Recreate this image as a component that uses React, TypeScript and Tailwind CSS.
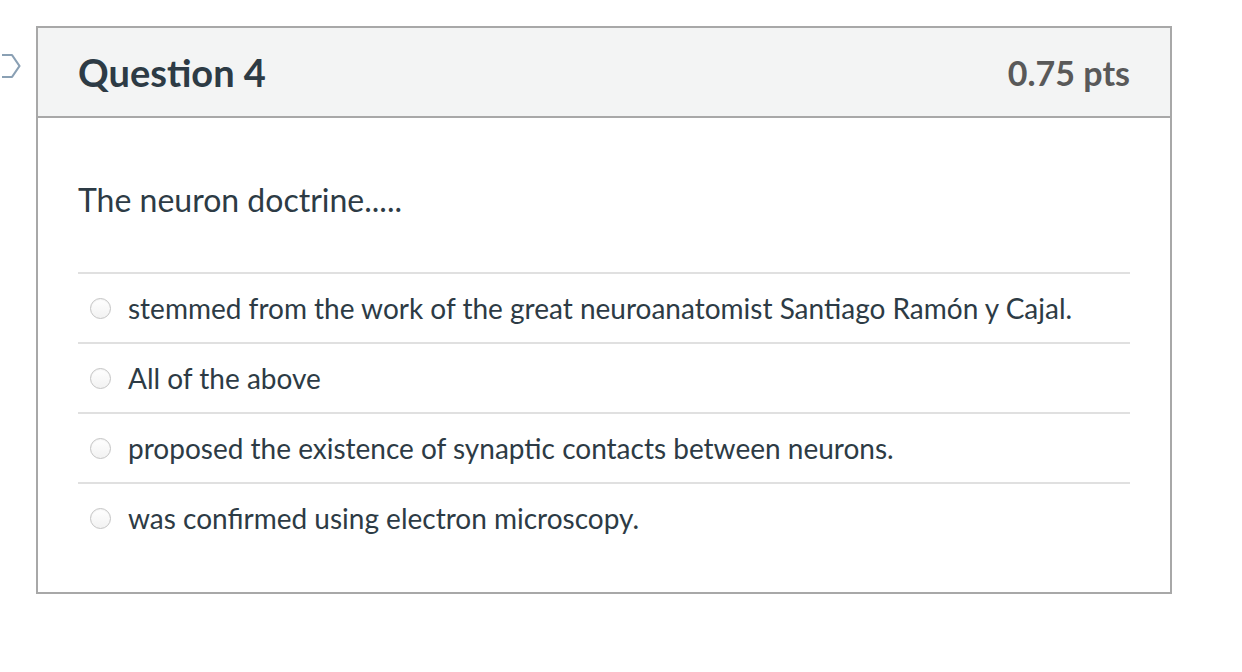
const answers = [
  'stemmed from the work of the great neuroanatomist Santiago Ramón y Cajal.',
  'All of the above',
  'proposed the existence of synaptic contacts between neurons.',
  'was confirmed using electron microscopy.',
]

function FlagIcon() {
  return (
    <svg width="24" height="26" viewBox="0 0 24 26" fill="none" className="absolute left-[-36px] top-[25px]">
      <path d="M-6 2 H10 L17.5 13 L10 24 H-6" stroke="#8aa0b4" strokeWidth="2.2" strokeLinejoin="round" />
    </svg>
  )
}

export default function App() {
  return (
    <div className="min-h-screen bg-white pt-[26px] font-['Lato','Noto_Sans',sans-serif] text-[#2d3b45]">
      <div className="relative ml-[36px] w-[1136px] border-2 border-[#a8a8a8]">
        <FlagIcon />
        <div className="flex h-[90px] items-center justify-between border-b-2 border-[#a8a8a8] bg-[#f3f4f4] px-10">
          <h2 className="text-[38px] font-bold">Question 4</h2>
          <span className="text-[34px] font-bold text-[#595959]">0.75 pts</span>
        </div>
        <div className="px-10 pb-[40px] pt-[62px]">
          <p className="mb-[52px] text-[32px] leading-[40px]">The neuron doctrine.....</p>
          <div>
            {answers.map((answer) => (
              <label key={answer} className="flex h-[70px] items-center border-t-2 border-[#e0e0e0] pl-[12px]">
                <span className="mr-[17px] h-[21px] w-[21px] shrink-0 rounded-full border border-[#c4c4c4] bg-gradient-to-b from-white to-[#f2f2f2] shadow-[inset_0_1px_1px_rgba(0,0,0,0.05)]" />
                <span className="text-[28px]">{answer}</span>
              </label>
            ))}
          </div>
        </div>
      </div>
    </div>
  )
}
